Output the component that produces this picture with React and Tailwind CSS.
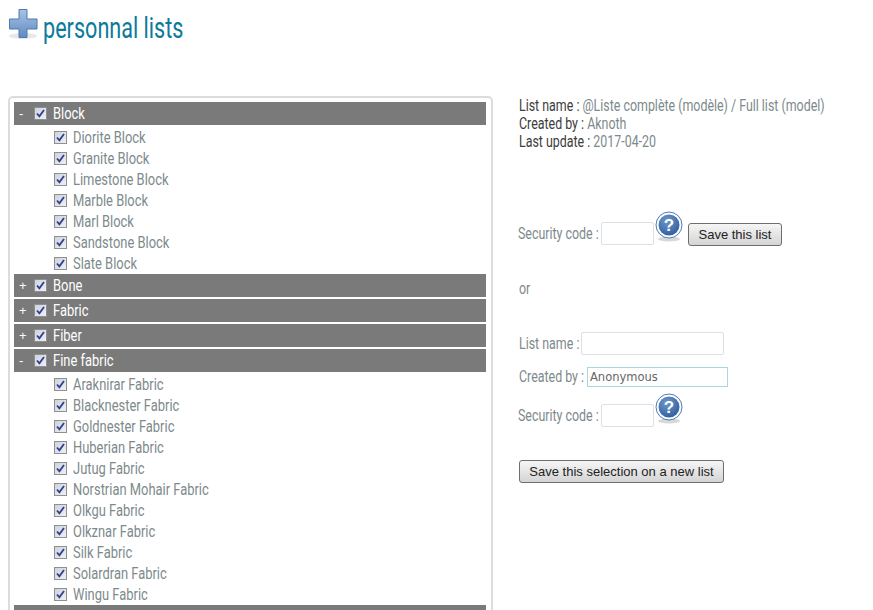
const groups = [
  { name: 'Block', open: true, items: ['Diorite Block', 'Granite Block', 'Limestone Block', 'Marble Block', 'Marl Block', 'Sandstone Block', 'Slate Block'] },
  { name: 'Bone' },
  { name: 'Fabric' },
  { name: 'Fiber' },
  { name: 'Fine fabric', open: true, items: ['Araknirar Fabric', 'Blacknester Fabric', 'Goldnester Fabric', 'Huberian Fabric', 'Jutug Fabric', 'Norstrian Mohair Fabric', 'Olkgu Fabric', 'Olkznar Fabric', 'Silk Fabric', 'Solardran Fabric', 'Wingu Fabric'] },
  { name: 'Fine leather' },
]

function Narrow({ className = '', children }) {
  return <span className={`block whitespace-nowrap origin-left scale-x-[0.73] text-[17px] ${className}`}>{children}</span>
}

function ListText({ children }) {
  return <span className="block ml-[6px] whitespace-nowrap origin-left scale-x-[0.76] text-[17px]">{children}</span>
}

function Check() {
  return (
    <span className="w-[13px] h-[13px] shrink-0 border border-[#8e8f8f] bg-gradient-to-br from-[#cfd2da] to-[#eef0f4] flex items-center justify-center">
      <svg width="9" height="9" viewBox="0 0 9 9">
        <path d="M1 4.5 L3.4 7.4 L8 1" fill="none" stroke="#2f3f8f" strokeWidth="1.8" />
      </svg>
    </span>
  )
}

function Group({ name, open, items }) {
  return (
    <div>
      <div className="h-[23px] bg-[#7a7a7a] text-white flex items-center mb-[2px]">
        <span className="w-[20px] pl-[5px] text-[13px] font-['Liberation_Sans',sans-serif]">{open ? '-' : '+'}</span>
        <Check />
        <ListText>{name}</ListText>
      </div>
      {open ? (
        <div>
          {items.map((it) => (
            <div key={it} className="h-[21px] pl-[40px] flex items-center text-[#7d8a8c]">
              <Check />
              <ListText>{it}</ListText>
            </div>
          ))}
        </div>
      ) : null}
    </div>
  )
}

function Help() {
  return (
    <svg width="30" height="32" viewBox="0 0 30 32" className="shrink-0 self-start -mt-[11px]">
      <defs>
        <radialGradient id="helpBlue" cx="0.4" cy="0.3" r="0.8">
          <stop offset="0" stopColor="#6f97c8" />
          <stop offset="1" stopColor="#2b5a9c" />
        </radialGradient>
      </defs>
      <ellipse cx="15" cy="28" rx="11" ry="2.5" fill="#c8c8c8" opacity="0.7" />
      <circle cx="15" cy="14" r="13" fill="#fff" stroke="#4f7cb4" strokeWidth="1" />
      <circle cx="15" cy="14" r="10.5" fill="url(#helpBlue)" />
      <text x="15" y="20" textAnchor="middle" fontSize="17" fontWeight="700" fill="#fff" fontFamily="Liberation Sans, sans-serif">?</text>
    </svg>
  )
}

function Plus() {
  return (
    <svg width="30" height="32" viewBox="0 0 30 32" className="shrink-0">
      <defs>
        <linearGradient id="plusBlue" x1="0" y1="0" x2="0" y2="1">
          <stop offset="0" stopColor="#a9c3e4" />
          <stop offset="1" stopColor="#5f8ac2" />
        </linearGradient>
      </defs>
      <ellipse cx="14" cy="28" rx="14" ry="3" fill="#e8e8e8" />
      <path d="M10 1.5 H18 V11 H28 V21 H18 V29.5 H10 V21 H0.5 V11 H10 Z" fill="url(#plusBlue)" stroke="#4f78b0" />
    </svg>
  )
}

function Button({ children, className }) {
  return (
    <button className={`h-[23px] border border-[#6e6e6e] rounded-[3px] bg-gradient-to-b from-[#f6f6f6] to-[#d4d4d4] text-[13px] text-[#222] font-['Liberation_Sans',sans-serif] ${className}`}>
      {children}
    </button>
  )
}

function Field({ className }) {
  return <input className={`h-[23px] border border-[#dcdfe6] rounded-[2px] bg-white ${className}`} />
}

export default function App() {
  return (
    <div className="h-[610px] overflow-hidden bg-white font-['Roboto',sans-serif]">
      <div className="h-[96px] pl-[9px] pt-[8px] flex items-start">
        <Plus />
        <h1 className="ml-[4px] mt-[3px] text-[29px] leading-[34px] whitespace-nowrap origin-left scale-x-[0.745] text-[#0b7a9b]">personnal lists</h1>
      </div>
      <div className="flex items-start">
        <div className="ml-[8px] w-[485px] h-[600px] border-2 border-[#dcdcdc] rounded-[5px] pl-[4px] pr-[5px] pt-[4px] shrink-0">
          {groups.map((g) => <Group key={g.name} {...g} />)}
        </div>
        <div className="ml-[26px] w-[340px] text-[#7d8a8c]">
          <div className="leading-[18px]">
            <Narrow><span className="text-[#3c3c3c]">List name : </span>@Liste complète (modèle) / Full list (model)</Narrow>
            <Narrow><span className="text-[#3c3c3c]">Created by : </span>Aknoth</Narrow>
            <Narrow><span className="text-[#3c3c3c]">Last update : </span>2017-04-20</Narrow>
          </div>
          <div className="mt-[72px] flex items-center h-[23px]">
            <Narrow className="w-[83px] -ml-[1px]">Security code :</Narrow>
            <Field className="w-[53px]" />
            <Help />
            <Button className="ml-[4px] mt-[2px] w-[94px]">Save this list</Button>
          </div>
          <Narrow className="mt-[33px] leading-[20px]">or</Narrow>
          <div className="mt-[34px] flex items-center h-[23px]">
            <Narrow className="w-[62px]">List name :</Narrow>
            <Field className="w-[143px]" />
          </div>
          <div className="mt-[12px] flex items-center h-[20px]">
            <Narrow className="w-[68px]">Created by :</Narrow>
            <input className="h-[20px] w-[141px] border border-[#a9d6e5] px-[2px] text-[11.5px] text-[#666] font-['DejaVu_Sans',sans-serif]" defaultValue="Anonymous" />
          </div>
          <div className="mt-[17px] flex items-center h-[23px]">
            <Narrow className="w-[83px] -ml-[1px]">Security code :</Narrow>
            <Field className="w-[53px]" />
            <Help />
          </div>
          <Button className="mt-[33px] w-[205px] block">Save this selection on a new list</Button>
        </div>
      </div>
    </div>
  )
}
